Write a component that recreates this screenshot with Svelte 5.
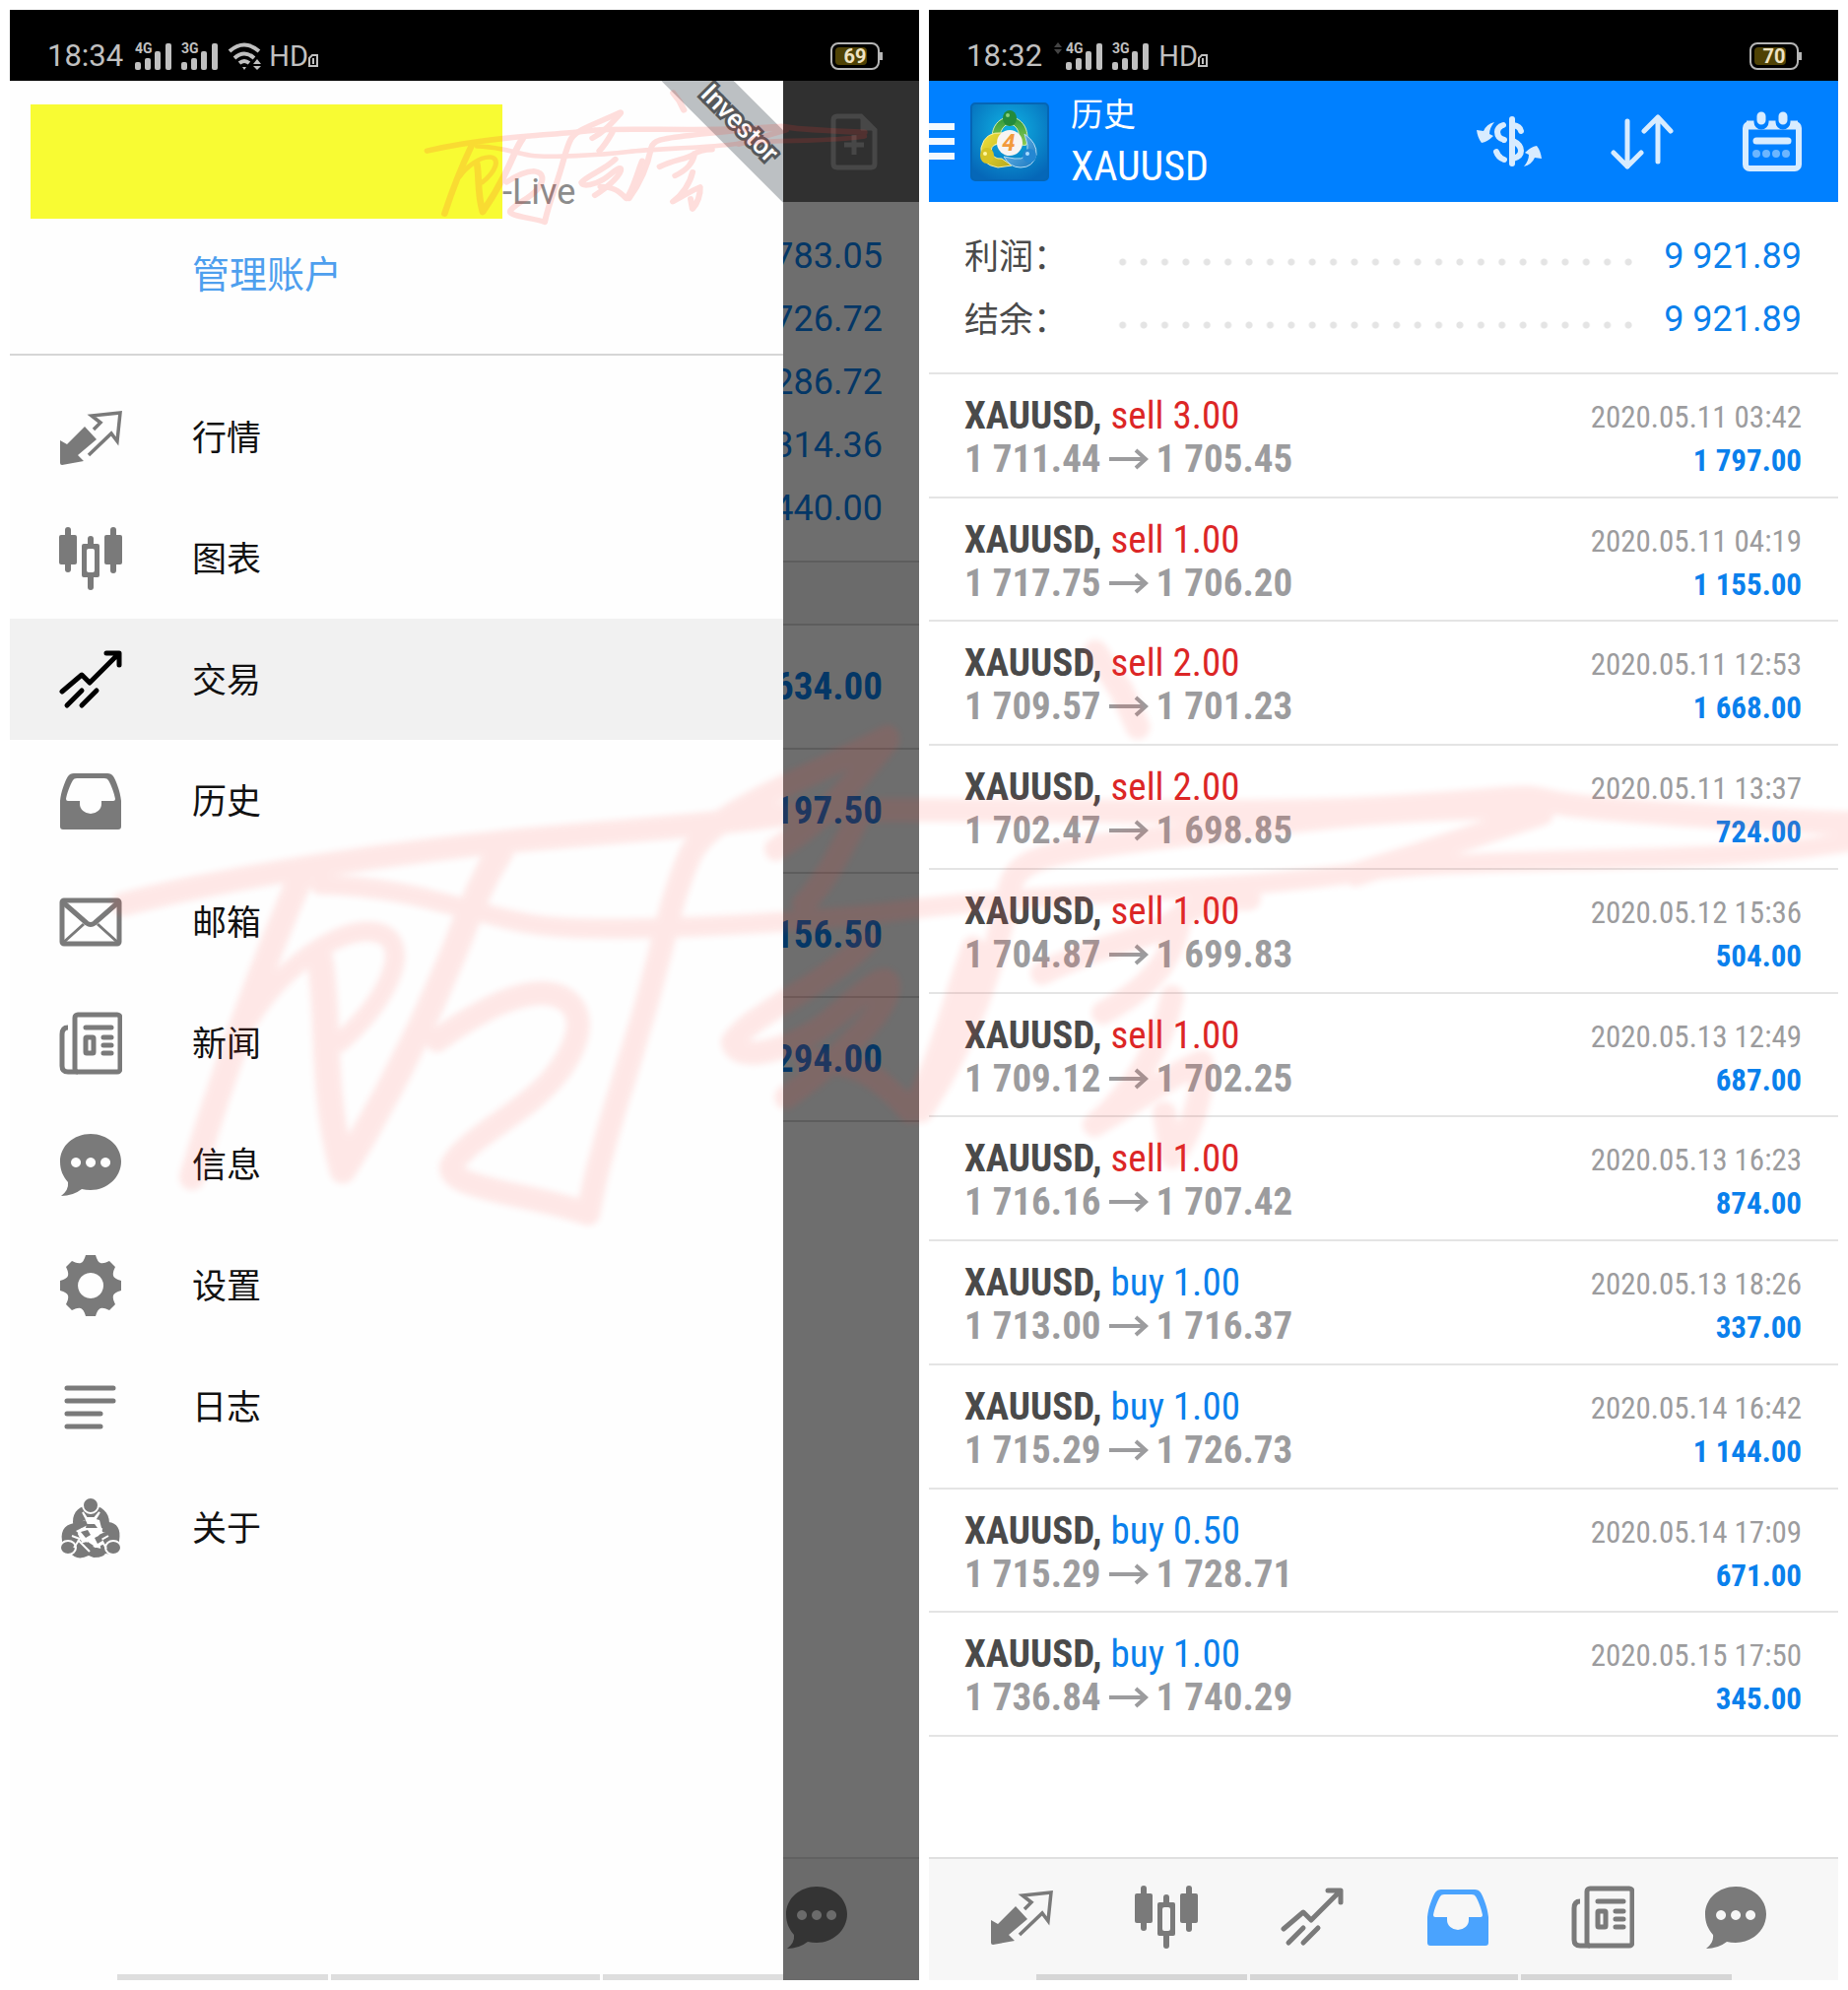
<script>
    const menu = [
        { icon: "quotes", label: "行情" },
        { icon: "chart", label: "图表" },
        { icon: "trade", label: "交易" },
        { icon: "history", label: "历史" },
        { icon: "mail", label: "邮箱" },
        { icon: "news", label: "新闻" },
        { icon: "chat", label: "信息" },
        { icon: "settings", label: "设置" },
        { icon: "journal", label: "日志" },
        { icon: "about", label: "关于" },
    ];

    const tabs = [
        { icon: "quotes", label: "行情" },
        { icon: "chart", label: "图表" },
        { icon: "trade", label: "交易" },
        { icon: "history", label: "历史" },
        { icon: "news", label: "新闻" },
        { icon: "chat", label: "信息" },
    ];

    const balances = ["783.05", "726.72", "286.72", "314.36", "440.00"];
    const positions = ["634.00", "197.50", "156.50", "294.00"];

    const summary = [
        { label: "利润：", value: "9 921.89" },
        { label: "结余：", value: "9 921.89" },
    ];

    const deals = [
        { side: "sell", volume: "3.00", open: "1 711.44", close: "1 705.45", time: "2020.05.11 03:42", profit: "1 797.00" },
        { side: "sell", volume: "1.00", open: "1 717.75", close: "1 706.20", time: "2020.05.11 04:19", profit: "1 155.00" },
        { side: "sell", volume: "2.00", open: "1 709.57", close: "1 701.23", time: "2020.05.11 12:53", profit: "1 668.00" },
        { side: "sell", volume: "2.00", open: "1 702.47", close: "1 698.85", time: "2020.05.11 13:37", profit: "724.00" },
        { side: "sell", volume: "1.00", open: "1 704.87", close: "1 699.83", time: "2020.05.12 15:36", profit: "504.00" },
        { side: "sell", volume: "1.00", open: "1 709.12", close: "1 702.25", time: "2020.05.13 12:49", profit: "687.00" },
        { side: "sell", volume: "1.00", open: "1 716.16", close: "1 707.42", time: "2020.05.13 16:23", profit: "874.00" },
        { side: "buy", volume: "1.00", open: "1 713.00", close: "1 716.37", time: "2020.05.13 18:26", profit: "337.00" },
        { side: "buy", volume: "1.00", open: "1 715.29", close: "1 726.73", time: "2020.05.14 16:42", profit: "1 144.00" },
        { side: "buy", volume: "0.50", open: "1 715.29", close: "1 728.71", time: "2020.05.14 17:09", profit: "671.00" },
        { side: "buy", volume: "1.00", open: "1 736.84", close: "1 740.29", time: "2020.05.15 17:50", profit: "345.00" },
    ];

    let section = $state("trade");
    let tab = $state("history");
</script>

{#snippet icon(name)}
    <svg class="icon" viewBox="0 0 64 64" fill="currentColor" aria-hidden="true">
        {#if name === "quotes"}
            <path d="M1 35l7 4 18-18 12 13-19 16 6 6-22 4q-2 0-2-2z" />
            <path d="M35 24l7-7-9-7 29-3-3 29-6-8-23 22" fill="none" stroke="currentColor" stroke-width="3.5" />
        {:else if name === "chart"}
            <rect x="0" y="8" width="18" height="30" rx="2" />
            <rect x="6" y="0" width="6" height="46" rx="3" />
            <rect x="46" y="8" width="18" height="30" rx="2" />
            <rect x="52" y="0" width="6" height="47" rx="3" />
            <rect x="29" y="9" width="6" height="12" rx="3" />
            <rect x="29" y="48" width="6" height="16" rx="3" />
            <path fill-rule="evenodd" d="M25 17h14q2 0 2 2v30q0 2-2 2H25q-2 0-2-2V19q0-2 2-2zm5 5q-2 0-2 2v20q0 2 2 2h4q2 0 2-2V24q0-2-2-2z" />
        {:else if name === "trade"}
            <g fill="none" stroke="currentColor" stroke-width="5" stroke-linecap="round" stroke-linejoin="round">
                <path d="M3 44l20-17 8 8L60 6M48 5h13v12" />
                <path d="M8 58l15-15M23 58l15-15" />
            </g>
        {:else if name === "history"}
            <path fill-rule="evenodd" d="M1 32C2 22 6 12 9 7q2-3 6-3h34q4 0 6 3c3 5 7 15 8 25v26q0 3-3 3H4q-3 0-3-3zM18 9q-3 0-4 2C11 16 8 24 7 30q0 2 2 2h12v3a11 10 0 0 0 22 0v-3h12q2 0 2-2c-1-6-4-14-7-19q-1-2-4-2z" />
        {:else if name === "mail"}
            <g fill="none" stroke="currentColor" stroke-width="5">
                <rect x="3" y="10" width="58" height="44" rx="2" />
                <path d="M4 12l24 21q4 3 8 0l24-21" />
                <path d="M4 53l21-19M60 53L39 34" stroke-width="3" />
            </g>
        {:else if name === "news"}
            <g fill="none" stroke="currentColor" stroke-width="5">
                <rect x="16" y="3" width="46" height="58" rx="3" />
                <path d="M9 16q-6 0-6 7v32q0 6 6 6h10" />
                <rect x="27" y="26" width="8" height="16" rx="1" />
                <path d="M27 16h26M45 26h8M45 34h8M45 42h8" stroke-linecap="round" />
            </g>
        {:else if name === "chat"}
            <path fill-rule="evenodd" d="M32 1c17 0 31 12 31 28S49 58 32 58q-5 0-9-1-9 7-21 7 8-6 7-14C4 44 1 38 1 29 1 13 15 1 32 1zM17 25a5 5 0 1 0 .1 0zm15 0a5 5 0 1 0 .1 0zm15 0a5 5 0 1 0 .1 0z" />
        {:else if name === "settings"}
            <path fill-rule="evenodd" d="M27 1h10q2 7 5 8 3 1 9-2l6 6q-3 6-2 9 1 3 8 5v10q-7 2-8 5-1 3 2 9l-6 6q-6-3-9-2-3 1-5 8H27q-2-7-5-8-3-1-9 2l-6-6q3-6 2-9-1-3-8-5V27q7-2 8-5 1-3-2-9l6-6q6 3 9 2 3-1 5-8zm5 18a13 13 0 1 0 .1 0z" />
        {:else if name === "journal"}
            <path d="M8 13h47M8 26h47M8 39h34M8 52h34" fill="none" stroke="currentColor" stroke-width="5" stroke-linecap="round" />
        {:else}
            <path d="M32 9c11 0 19 7 19 18 0 6-3 11-7 9l-3-12-7-2h-4l-6 3-4 7q-6 0-6-6C14 15 21 9 32 9z" />
            <path d="M3 45c-2-12 5-18 15-18l9-3 2 5-12 6 7 6-3 16q-12 4-18-3z" />
            <path d="M61 45c2-12-2-18-11-19l-3 10-9 4 3 6 2 11q12 4 18-3z" />
            <path d="M11 57l15-12 8 6 13 3q2 8-12 8l-5-2q-12 6-19-3z" />
            <g stroke="#fefefe" stroke-width="2">
                <path d="M24 16l4 6h8l5-6-9 15z" fill="#fefefe" />
                <path d="M26 33l8-6 9 6-4 7 5 8-7 3-5-7-8 2-4-8z" fill="#fefefe" />
                <circle cx="32" cy="9" r="8" />
                <ellipse cx="9" cy="52" rx="8" ry="7" />
                <ellipse cx="55" cy="52" rx="8" ry="7" />
                <path d="M13 40l8 3-6 9M50 40l-7 4 5 9M19 44l12 12M22 33l10 9" fill="none" />
            </g>
            <path d="M28 28h8l3 4H27zM22 36l7-2 3 5-5 3zM36 42l6-3 2 6-5 3zM29 46l6 4-3 4-5-4z" />
        {/if}
    </svg>
{/snippet}

{#snippet signal(kind)}
    <svg class="signal" viewBox="0 -4 38 36" width="38" height="36">
        <rect x="0" y="20" width="6" height="8" rx="2" />
        <rect x="10" y="16" width="6" height="12" rx="2" />
        <rect x="20" y="9" width="6" height="19" rx="2" />
        <rect x="31" y="1" width="6" height="27" rx="2" />
        <text x="0" y="11">{kind}</text>
    </svg>
{/snippet}

{#snippet network()}
    <span class="hd">HD</span>
    <svg class="sim" viewBox="0 0 10 14" width="10" height="14">
        <path d="M1 5l3-3h5v11H1z" fill="none" stroke="#c0c0c0" stroke-width="2" />
        <path d="M5 5v6" stroke="#c0c0c0" stroke-width="2" />
    </svg>
{/snippet}

{#snippet battery(level)}
    <span class="battery">
        <span class="charge" style="width: {level}%"></span>
        <b>{level}</b>
    </span>
{/snippet}

{#snippet tabbar(active)}
    <nav class="tabbar">
        {#each tabs as item}
            <button class:active={active === item.icon} aria-label={item.label} onclick={() => (tab = item.icon)}>
                {@render icon(item.icon)}
            </button>
        {/each}
    </nav>
{/snippet}

<!-- one signature, drawn large over both phones and small over the account -->
{#snippet signature()}
    <path d="M125 918C240 888 420 862 560 850S730 836 800 826 1240 830 1400 820 1540 806 1575 814 1750 830 1880 836" stroke-width="24" />
    <path d="M325 898C420 900 470 926 540 938S830 936 933 922 1250 905 1376 886 1730 880 1880 854" stroke-width="20" />
    <path d="M1565 820C1400 818 1300 836 1180 850S1030 872 1024 905C1010 980 980 1060 935 1128" stroke-width="24" />
    <path d="M1565 826L1376 888" stroke-width="24" />
    <path d="M304 893C275 960 235 1060 195 1195" stroke-width="26" />
    <path d="M255 1032C280 990 340 940 380 946S400 1010 345 1058" stroke-width="20" />
    <path d="M325 975C335 1040 325 1100 348 1188 390 1120 430 1040 455 980S485 900 508 864" stroke-width="27" />
    <path d="M444 1056C480 1030 520 1008 552 1008 596 1012 596 1050 565 1090S480 1150 459 1182C448 1206 540 1212 597 1232 610 1160 640 1080 660 1005S685 900 702 865C730 820 800 800 901 748" stroke-width="24" />
    <path d="M901 752C870 790 840 830 788 862M868 836C850 870 840 890 816 918M880 955C840 1000 760 1030 744 1058 750 1080 800 1065 830 1045S900 980 902 1000 860 1070 798 1114" stroke-width="24" />
    <path d="M820 1076C870 1078 890 1090 924 1128 950 1095 970 1010 988 962" stroke-width="24" />
    <path d="M1112 662L1138 700 1155 738" stroke-width="25" />
    <path d="M1268 912C1230 912 1210 920 1190 936S1110 960 1058 988M1198 930C1192 970 1172 1000 1120 1028M1190 1012C1180 1060 1150 1110 1111 1142 1150 1120 1190 1090 1220 1078 1222 1110 1210 1150 1190 1174M1182 1130L1189 1172" stroke-width="24" />
{/snippet}

<div class="page">
    <section class="phone">
        <div class="statusbar">
            <span class="clock">18:34</span>
            {@render signal("4G")}
            {@render signal("3G")}
            <svg class="wifi" viewBox="0 0 36 28" width="36" height="28" fill="none" stroke="#c0c0c0" stroke-width="4">
                <path d="M2 9q15-13 30 0M7 16q10-9 20 0M12 21q5-4 10 0" />
                <path d="M15 25h4l-2 3z" fill="#c0c0c0" stroke="none" />
                <path d="M26 22l4-5 4 5zM26 24h8l-4 4z" fill="#c0c0c0" stroke="none" />
            </svg>
            {@render network()}
            {@render battery(69)}
        </div>
        <div class="behind">
            <header class="appbar grey">
                <button class="tool" aria-label="新订单">
                    <svg viewBox="0 0 48 58" width="48" height="58" fill="none" stroke="currentColor">
                        <path d="M7 3h24l14 14v34q0 4-4 4H7q-4 0-4-4V7q0-4 4-4z" stroke-width="5" />
                        <path d="M31 3v14h14z" fill="currentColor" />
                        <path d="M24 22v20M14 32h20" stroke-width="5" />
                    </svg>
                </button>
            </header>
            <div class="balances">
                {#each balances as value}
                    <div class="figure">{value}</div>
                {/each}
            </div>
            <div class="band"></div>
            {#each positions as value}
                <div class="position">{value}</div>
            {/each}
            {@render tabbar("")}
            <div class="scrim"></div>
        </div>
        <aside class="drawer">
            <div class="account">
                <div class="server"><span class="mask"></span>-Live</div>
                <a class="manage" href="#accounts">管理账户</a>
                <div class="ribbon"><span>Investor</span></div>
            </div>
            <nav class="menu">
                {#each menu as item}
                    <button class:active={section === item.icon} onclick={() => (section = item.icon)}>
                        {@render icon(item.icon)}
                        <span>{item.label}</span>
                    </button>
                {/each}
            </nav>
            <div class="handle"><i></i><i></i><i></i></div>
        </aside>
    </section>

    <section class="phone">
        <div class="statusbar">
            <span class="clock">18:32</span>
            <svg class="traffic" viewBox="0 0 8 12" width="8" height="12" fill="#444">
                <path d="M0 5l4-5 4 5zM0 7h8l-4 5z" />
            </svg>
            {@render signal("4G")}
            {@render signal("3G")}
            {@render network()}
            {@render battery(70)}
        </div>
        <header class="appbar">
            <button class="burger" aria-label="菜单"><i></i><i></i><i></i></button>
            <svg class="logo" viewBox="0 0 80 80" width="80" height="80">
                <defs>
                    <radialGradient id="sky" cx="50%" cy="35%" r="70%">
                        <stop offset="0" stop-color="#10b4e4" />
                        <stop offset="1" stop-color="#0567b8" />
                    </radialGradient>
                    <linearGradient id="leaf" x2="0" y2="1">
                        <stop offset="0" stop-color="#2f9a3c" />
                        <stop offset="1" stop-color="#8fcb52" />
                    </linearGradient>
                    <linearGradient id="sun" x2="1" y2="1">
                        <stop offset="0" stop-color="#f2e23c" />
                        <stop offset="1" stop-color="#b5a81c" />
                    </linearGradient>
                    <linearGradient id="sea" x2="1" y2="1">
                        <stop offset="0" stop-color="#7cc4f0" />
                        <stop offset="1" stop-color="#1776bf" />
                    </linearGradient>
                </defs>
                <rect x="1" y="1" width="78" height="78" rx="4" fill="url(#sky)" stroke="#0565b5" stroke-width="2" />
                <path d="M23 43C19 27 28 15 40 15s21 12 17 28q-5 2-8-4 2-11-5-16h-8q-7 5-5 15-3 6-8 5z" fill="url(#leaf)" stroke="#d6ecb0" />
                <path d="M33 31q-18-2-22 15-2 17 17 20l14-2-10-7q-9 1-11-8 1-8 12-8z" fill="url(#sun)" stroke="#f5efab" />
                <path d="M55 32q13 9 12 21-3 13-16 13-11 0-17-11l11 2q15 2 13-14z" fill="url(#sea)" stroke="#b7def5" />
                <ellipse cx="40" cy="16" rx="7" ry="8" fill="#248b3b" />
                <circle cx="38" cy="13" r="2" fill="#8bd17d" />
                <ellipse cx="17" cy="54" rx="7" ry="8" fill="#d5c326" />
                <circle cx="15" cy="52" r="2" fill="#fff7a0" />
                <circle cx="60" cy="54" r="7" fill="#2487d2" />
                <circle cx="58" cy="52" r="2" fill="#aadcff" />
                <circle cx="40" cy="41" r="13" fill="#f8f4f2" />
                <text x="39" y="49" text-anchor="middle">4</text>
            </svg>
            <div class="title">
                <div>历史</div>
                <div class="symbol">XAUUSD</div>
            </div>
            <div class="tools">
                <button class="tool" aria-label="交易品种">
                    <svg viewBox="0 0 68 56" width="68" height="56" fill="none" stroke="currentColor" stroke-width="6" stroke-linecap="round">
                        <path d="M38 5v45" />
                        <path d="M29 11q-6 2-6 7 0 6 7 8M22 38q2 6 8 8M39 11q7 1 8 6M39 27q8 4 8 10 0 6-8 8" />
                        <path d="M20 8q-8 2-11 9l-7-1q1 8 5 13 6-1 12-7l-4-2q0-6 5-12z" fill="currentColor" stroke="none" />
                        <path d="M50 53q8-2 11-9l7 1q-1-8-5-13-6 1-12 7l4 2q0 6-5 12z" fill="currentColor" stroke="none" />
                    </svg>
                </button>
                <button class="tool" aria-label="排序">
                    <svg viewBox="0 0 64 56" width="64" height="56" fill="none" stroke="currentColor" stroke-width="5" stroke-linecap="round" stroke-linejoin="round">
                        <path d="M17 7v46M3 39l14 14 14-14M48 48V3M34 17L48 3l13 14" />
                    </svg>
                </button>
                <button class="tool" aria-label="日期">
                    <svg viewBox="0 0 60 62" width="60" height="62" fill="none" stroke="currentColor">
                        <rect x="3" y="13" width="54" height="45" rx="4" stroke-width="6" />
                        <path d="M4 14h52" stroke-width="9" />
                        <path d="M19 6v5M41 6v5" stroke="#0080ff" stroke-width="15" stroke-linecap="round" />
                        <path d="M19 5v4M41 5v4" stroke-width="9" stroke-linecap="round" />
                        <path d="M14 30h32" stroke-width="7" stroke-linecap="round" />
                        <path d="M14 43h33" stroke-width="8" stroke-linecap="round" stroke-dasharray="0 10" opacity=".5" />
                    </svg>
                </button>
            </div>
        </header>
        <dl class="summary">
            {#each summary as row}
                <div>
                    <dt>{row.label}</dt>
                    <dd class="dots" aria-hidden="true"></dd>
                    <dd>{row.value}</dd>
                </div>
            {/each}
        </dl>
        <ul class="deals">
            {#each deals as deal}
                <li>
                    <div class="what">
                        <div><b>XAUUSD,</b> <span class={deal.side}>{deal.side} {deal.volume}</span></div>
                        <div class="prices">
                            {deal.open}
                            <svg viewBox="0 0 40 22" width="40" height="22" fill="none" stroke="currentColor" stroke-width="4">
                                <path d="M0 11h37M27 2l10 9-10 9" />
                            </svg>
                            {deal.close}
                        </div>
                    </div>
                    <div class="result">
                        <time>{deal.time}</time>
                        <b>{deal.profit}</b>
                    </div>
                </li>
            {/each}
        </ul>
        {@render tabbar(tab)}
        <div class="handle"><i></i><i></i><i></i></div>
    </section>

    <svg class="signatures" viewBox="0 0 1876 2020" aria-hidden="true">
        <g class="large">{@render signature()}</g>
        <g class="small" transform="translate(402 -58) scale(.253 .23)">{@render signature()}</g>
    </svg>
</div>

<style>
    :global(body) {
        background: #fff;
    }

    .page {
        --blue: #0a80ec;
        --narrow: "Roboto Condensed", "Liberation Sans Narrow", Roboto, sans-serif;
        position: relative;
        display: grid;
        grid-template-columns: 1fr 1fr;
        gap: 10px;
        padding: 10px;
        overflow: hidden;
        font-family: Roboto, "Noto Sans CJK SC", sans-serif;
        font-size: 36px;
    }

    .phone {
        position: relative;
        display: flex;
        flex-direction: column;
        min-height: calc(100vh - 20px);
        overflow: hidden;
    }

    button {
        padding: 0;
        border: none;
        background: none;
        color: inherit;
        font: inherit;
        cursor: pointer;
    }

    svg {
        display: block;
        flex: none;
    }

    .icon {
        width: 64px;
        height: 64px;
    }

    .statusbar {
        display: flex;
        align-items: center;
        height: 72px;
        padding: 22px 40px 0 38px;
        box-sizing: border-box;
        background: #000;
        color: #c0c0c0;
        font-size: 31px;
        line-height: 36px;
    }

    .clock {
        margin-right: 12px;
    }

    .traffic {
        margin: 0 4px 16px 0;
    }

    .signal {
        margin-right: 9px;
        fill: #c0c0c0;
    }

    .signal text {
        font-size: 14px;
        font-weight: 700;
    }

    .wifi {
        margin-right: 6px;
    }

    .hd {
        font-size: 29px;
    }

    .sim {
        margin-top: 8px;
    }

    .battery {
        position: relative;
        display: flex;
        align-items: center;
        justify-content: center;
        width: 50px;
        height: 28px;
        margin-left: auto;
        box-sizing: border-box;
        border: 2px solid #b5b5b5;
        border-radius: 8px;
        font-size: 20px;
        color: #eee3c4;
    }

    .battery::after {
        content: "";
        position: absolute;
        right: -5px;
        width: 3px;
        height: 8px;
        background: #b5b5b5;
    }

    .charge {
        position: absolute;
        left: 3px;
        top: 3px;
        bottom: 3px;
        border-radius: 4px;
        background: #4f4205;
    }

    .battery b {
        position: relative;
    }

    .appbar {
        display: flex;
        align-items: center;
        height: 123px;
        padding-right: 37px;
        background: #0080ff;
        color: #d8ecff;
    }

    .appbar.grey {
        justify-content: flex-end;
        padding-right: 42px;
        background: #707070;
        color: #a4a4a4;
    }

    .burger i {
        display: block;
        width: 26px;
        height: 7px;
        margin: 8px 0;
        background: #f2f9ff;
    }

    .logo {
        margin: 0 22px 0 16px;
    }

    .logo text {
        fill: #f29a3c;
        font-size: 24px;
        font-weight: 700;
        font-style: italic;
    }

    .title {
        padding-bottom: 2px;
        color: #fff;
        font-size: 33px;
        line-height: 52px;
    }

    .symbol {
        font-family: var(--narrow);
        font-size: 42px;
    }

    .tools {
        display: flex;
        align-items: center;
        gap: 70px;
        margin-left: auto;
    }

    .summary {
        margin: 0;
        padding: 23px 37px 22px 36px;
        border-bottom: 2px solid #e4e4e4;
    }

    .summary div {
        display: flex;
        align-items: center;
        height: 64px;
    }

    .summary dt {
        width: 150px;
        margin-bottom: 6px;
        color: #4a4a4a;
        font-size: 35px;
    }

    .summary dd {
        width: 165px;
        margin: 0;
        text-align: right;
        color: var(--blue);
    }

    .summary .dots {
        flex: 1;
        height: 8px;
        margin-top: 12px;
        background: radial-gradient(circle, #e4e4e4 3px, transparent 4px) 0 0 / 21px 8px round;
    }

    .deals {
        display: grid;
        grid-auto-rows: 1fr;
        flex: 1;
        margin: 0;
        padding: 0 0 122px;
        list-style: none;
        font-family: var(--narrow);
    }

    .deals li {
        display: flex;
        justify-content: space-between;
        padding: 0 37px 0 36px;
        border-bottom: 2px solid #e4e4e4;
        line-height: 44px;
    }

    .what {
        padding-top: 20px;
        font-size: 39px;
        color: #4a4a4a;
    }

    .sell {
        color: #dc2626;
    }

    .buy {
        color: var(--blue);
    }

    .prices {
        display: flex;
        align-items: center;
        gap: 8px;
        font-weight: 700;
        color: #9c9c9e;
    }

    .result {
        padding-top: 22px;
        text-align: right;
        font-size: 31px;
        color: #9c9c9e;
    }

    .result b {
        display: block;
        color: var(--blue);
    }

    .tabbar {
        display: grid;
        grid-template-columns: repeat(5, 1fr) 122px;
        height: 125px;
        padding: 0 43px 5px 20px;
        box-sizing: border-box;
        border-top: 2px solid #e0e0e0;
        background: #f7f7f7;
        color: #7a7a7a;
    }

    .tabbar button {
        display: flex;
        align-items: center;
        justify-content: center;
    }

    .tabbar .active {
        color: #4aa3fe;
    }

    .handle {
        position: absolute;
        left: 109px;
        right: 108px;
        bottom: 0;
        display: grid;
        grid-template-columns: 214fr 273fr 214fr;
        gap: 3px;
        height: 6px;
    }

    .handle i {
        background: #d6d6d6;
    }

    .behind {
        position: relative;
        display: flex;
        flex: 1;
        flex-direction: column;
    }

    .scrim {
        position: absolute;
        inset: 0;
        background: rgba(0, 0, 0, 0.57);
    }

    .balances {
        padding: 23px 37px 21px;
        border-bottom: 2px solid #d8d8d8;
        text-align: right;
        line-height: 64px;
        color: var(--blue);
    }

    .band {
        height: 62px;
        border-bottom: 2px solid #d8d8d8;
        background: #f7f7f7;
    }

    .position {
        height: 126px;
        padding: 0 37px;
        box-sizing: border-box;
        border-bottom: 2px solid #d8d8d8;
        font-family: var(--narrow);
        font-size: 39px;
        font-weight: 700;
        line-height: 124px;
        text-align: right;
        color: var(--blue);
    }

    .behind .tabbar {
        margin-top: auto;
    }

    .drawer {
        position: absolute;
        top: 72px;
        bottom: 0;
        left: 0;
        width: 85%;
        overflow: hidden;
        background: #fefefe;
    }

    .account {
        position: relative;
        height: 279px;
        padding: 24px 21px;
        box-sizing: border-box;
        border-bottom: 2px solid #d6d6d6;
    }

    .server {
        display: flex;
        align-items: flex-end;
        color: #8c8c8c;
        line-height: 54px;
    }

    .mask {
        width: 479px;
        height: 116px;
        background: #f8fb33;
    }

    .manage {
        display: block;
        margin: 31px 0 0 164px;
        font-size: 38px;
        line-height: 52px;
        color: #4e9fee;
        text-decoration: none;
    }

    .ribbon {
        position: absolute;
        top: 17px;
        right: -56px;
        width: 200px;
        transform: rotate(45deg);
        background: #bcc0c3;
        color: #fff;
        font-size: 27px;
        font-weight: 500;
        line-height: 52px;
        text-align: center;
    }

    .ribbon span {
        -webkit-text-stroke: 6px #55585b;
        paint-order: stroke fill;
    }

    .menu {
        padding-top: 21px;
    }

    .menu button {
        display: flex;
        align-items: center;
        gap: 71px;
        width: 100%;
        height: 123px;
        padding-left: 50px;
        color: #7a7a7a;
    }

    .menu span {
        margin-bottom: 4px;
        color: #111;
        font-size: 35px;
    }

    .menu .active {
        background: #f1f1f1;
        color: #000;
    }

    .drawer .handle {
        right: -31px;
    }

    .drawer .handle i {
        background: #dedede;
    }

    .signatures {
        position: absolute;
        inset: 0;
        width: 100%;
        pointer-events: none;
        fill: none;
        stroke: #ff3b30;
        stroke-linecap: round;
        stroke-linejoin: round;
    }

    .signatures .large {
        opacity: 0.11;
        filter: blur(3px);
    }

    .signatures .small {
        opacity: 0.16;
    }
</style>
